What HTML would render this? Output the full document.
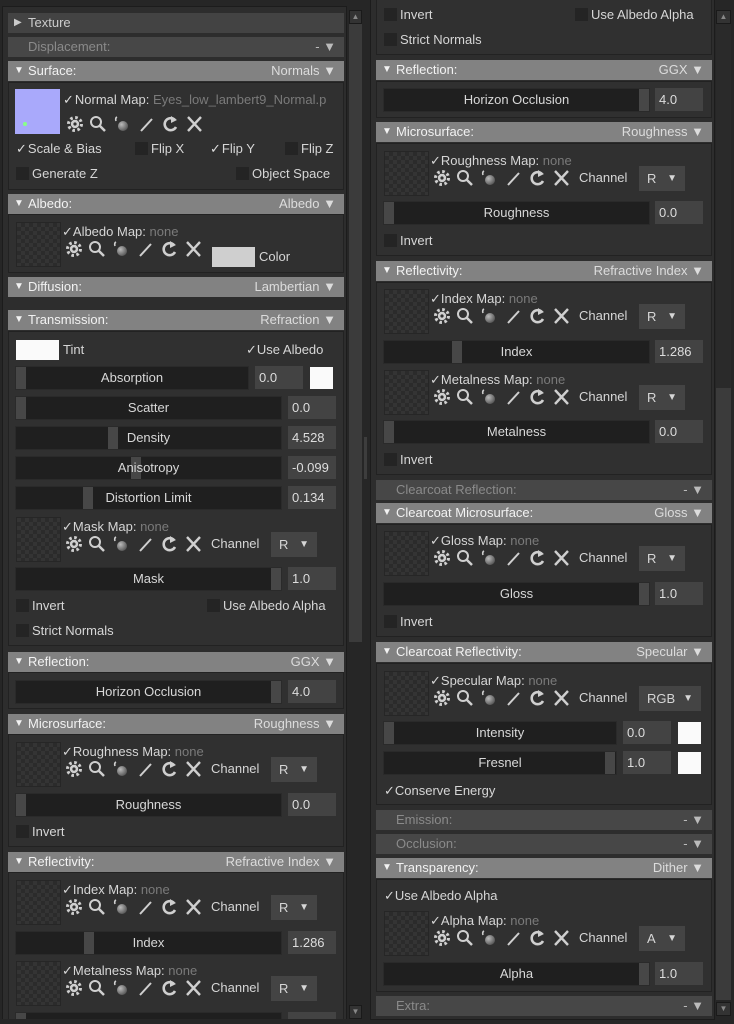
<!DOCTYPE html>
<html><head><meta charset="utf-8"><style>
*{margin:0;padding:0;box-sizing:border-box}
html,body{width:734px;height:1024px;overflow:hidden}
body{background:#262626;font-family:"Liberation Sans","DejaVu Sans",sans-serif;font-size:13px;color:#d6d6d6;position:relative}
div,span{position:absolute}
.pn{background:#2d2d2d;border:1px solid #1c1c1c}
.bd{background:#303030;border:1px solid #222;left:8px;width:336px}
.r .bd{left:376px}
.h{height:20px;width:336px;left:8px;background:#828282;color:#f2f2f2;line-height:20px;padding-left:8px}
.h b{position:absolute;right:8px;top:0;font-weight:normal;color:#dcdcdc}
.hi{background:#474747;color:#8a8a8a;padding-left:20px}
.hi b{color:#bbb}
.t{line-height:16px;white-space:nowrap}
.cb{width:13px;height:13px;background:#242424;position:relative;display:inline-block;vertical-align:-2px;margin-right:3px}
.ck{color:#ddd;margin-right:1px}
.sl{height:24px;background:#1f1f1f;border:1px solid #2a2a2a;text-align:center;line-height:22px;color:#d8d8d8}
.sl i{position:absolute;top:0;height:22px;width:10px;background:#474747}
.sl span{position:relative}
.n{height:23px;background:#434343;line-height:23px;padding-left:4px;color:#ddd}
.sw{background:#fafafa}
.th{width:45px;height:45px;border:1px solid #262626;background:conic-gradient(#2b2b2b 25%,#343434 0 50%,#2b2b2b 0 75%,#343434 0) 0 0/8px 8px}
.mp{width:330px;height:46px}
.mp .th{left:0;top:0}
.mp .lb{left:46px;top:2px}
.mp .nn{color:#7a7a7a}
.mp svg{position:absolute;left:48px;top:16px}
.mp .ch{left:195px;top:19px;line-height:16px}
.dd{left:255px;top:15px;width:46px;height:25px;background:#444;line-height:25px;padding-left:8px}
.dd:after{content:"▼";position:absolute;right:8px;font-size:10px}
.sb{background:#3b3b3b}
</style></head><body>
<svg width="0" height="0" style="position:absolute"><defs>
<radialGradient id="g" cx="0.35" cy="0.35" r="0.7"><stop offset="0" stop-color="#bbb"/><stop offset="1" stop-color="#555"/></radialGradient>
<symbol id="ic" viewBox="0 0 150 22">
<g fill="none" stroke="#cfcfcf">
<circle cx="10" cy="11" r="6.5" stroke-width="3" stroke-dasharray="2.6 2.5"/>
<circle cx="10" cy="11" r="4.2" fill="#cfcfcf" stroke="none"/>
<circle cx="10" cy="11" r="1.6" fill="#303030" stroke="none"/>
<circle cx="31" cy="9" r="5" stroke-width="2"/>
<line x1="34.5" y1="12.5" x2="40" y2="18" stroke-width="2.5"/>
<path d="M52 4 q-2 1 -1 4" stroke-width="1.6"/>
<line x1="76" y1="18" x2="87" y2="6" stroke-width="2"/>
<path d="M110 7 A6 6 0 1 0 111 14" stroke-width="2.6"/>
<path d="M123 4 L136 18 M136 4 L123 18" stroke-width="2.4"/>
</g>
<circle cx="58" cy="13" r="5" fill="url(#g)"/>
<path d="M106 3 L112 7 L106 10 Z" fill="#cfcfcf"/>
</symbol></defs></svg>

<!-- LEFT PANEL -->
<div class="pn" style="left:2px;top:6px;width:345px;height:1016px"></div>
<div class="sb" style="left:349px;top:10px;width:13px;height:632px"></div>
<div style="left:349px;top:10px;width:13px;height:14px;border:1px solid #1a1a1a;background:#333;color:#888;font-size:8px;text-align:center;line-height:12px">▲</div>
<div style="left:349px;top:1005px;width:13px;height:14px;border:1px solid #1a1a1a;background:#333;color:#888;font-size:8px;text-align:center;line-height:12px">▼</div>
<div style="left:364px;top:437px;width:3px;height:42px;background:#3d3d3d"></div>

<div class="h" style="top:13px;background:#434343;color:#ccc"><span style="font-size:10px;left:6px">▶</span><span style="left:20px">Texture</span></div>
<div class="h hi" style="top:37px">Displacement:<b>- ▼</b></div>
<div class="h" style="top:61px"><span style="font-size:10px;left:6px">▼</span><span style="left:20px">Surface:</span><b>Normals ▼</b></div>
<div class="bd" style="top:82px;height:108px"></div>
<div style="left:15px;top:89px;width:45px;height:45px;background:#a9a9fb"><span style="left:8px;top:33px;width:4px;height:4px;background:#8f8;border-radius:2px"></span></div>
<div class="t" style="left:63px;top:92px"><span class="ck" style="position:static">✓</span>Normal Map: <span style="position:static;color:#7a7a7a">Eyes_low_lambert9_Normal.p</span></div>
<svg style="position:absolute;left:65px;top:113px" width="150" height="22"><use href="#ic"/></svg>
<div class="t" style="left:16px;top:141px"><span class="ck" style="position:static">✓</span>Scale &amp; Bias</div>
<div class="t" style="left:135px;top:141px"><span class="cb"></span>Flip X</div>
<div class="t" style="left:210px;top:141px"><span class="ck" style="position:static">✓</span>Flip Y</div>
<div class="t" style="left:285px;top:141px"><span class="cb"></span>Flip Z</div>
<div class="t" style="left:16px;top:166px"><span class="cb"></span>Generate Z</div>
<div class="t" style="left:236px;top:166px"><span class="cb"></span>Object Space</div>

<div class="h" style="top:194px"><span style="font-size:10px;left:6px">▼</span><span style="left:20px">Albedo:</span><b>Albedo ▼</b></div>
<div class="bd" style="top:214px;height:59px"></div>
<div class="mp" style="left:16px;top:222px"><div class="th"></div><div class="t lb">✓Albedo Map: <span class="nn" style="position:static">none</span></div><svg width="150" height="22"><use href="#ic"/></svg><div style="left:196px;top:25px;width:43px;height:20px;background:#cfcfcf"></div><div class="t" style="left:243px;top:27px">Color</div></div>

<div class="h" style="top:277px"><span style="font-size:10px;left:6px">▼</span><span style="left:20px">Diffusion:</span><b>Lambertian ▼</b></div>
<div class="h" style="top:310px"><span style="font-size:10px;left:6px">▼</span><span style="left:20px">Transmission:</span><b>Refraction ▼</b></div>
<div class="bd" style="top:331px;height:315px"></div>
<div class="sw" style="left:16px;top:340px;width:43px;height:20px"></div>
<div class="t" style="left:63px;top:342px">Tint</div>
<div class="t" style="left:246px;top:342px">✓Use Albedo</div>
<div class="sl" style="left:15px;top:366px;width:234px"><i style="left:0"></i><span>Absorption</span></div>
<div class="n" style="left:255px;top:366px;width:48px">0.0</div>
<div class="sw" style="left:310px;top:367px;width:23px;height:22px"></div>
<div class="sl" style="left:15px;top:396px;width:267px"><i style="left:0"></i><span>Scatter</span></div>
<div class="n" style="left:288px;top:396px;width:48px">0.0</div>
<div class="sl" style="left:15px;top:426px;width:267px"><i style="left:92px"></i><span>Density</span></div>
<div class="n" style="left:288px;top:426px;width:48px">4.528</div>
<div class="sl" style="left:15px;top:456px;width:267px"><i style="left:115px"></i><span>Anisotropy</span></div>
<div class="n" style="left:288px;top:456px;width:48px">-0.099</div>
<div class="sl" style="left:15px;top:486px;width:267px"><i style="left:67px"></i><span>Distortion Limit</span></div>
<div class="n" style="left:288px;top:486px;width:48px">0.134</div>
<div class="mp" style="left:16px;top:517px"><div class="th"></div><div class="t lb">✓Mask Map: <span class="nn" style="position:static">none</span></div><svg width="150" height="22"><use href="#ic"/></svg><div class="t ch">Channel</div><div class="dd">R</div></div>
<div class="sl" style="left:15px;top:567px;width:267px"><i style="left:255px"></i><span>Mask</span></div>
<div class="n" style="left:288px;top:567px;width:48px">1.0</div>
<div class="t" style="left:16px;top:598px"><span class="cb"></span>Invert</div>
<div class="t" style="left:207px;top:598px"><span class="cb"></span>Use Albedo Alpha</div>
<div class="t" style="left:16px;top:623px"><span class="cb"></span>Strict Normals</div>

<div class="h" style="top:652px"><span style="font-size:10px;left:6px">▼</span><span style="left:20px">Reflection:</span><b>GGX ▼</b></div>
<div class="bd" style="top:672px;height:37px"></div>
<div class="sl" style="left:15px;top:680px;width:267px"><i style="left:255px"></i><span>Horizon Occlusion</span></div>
<div class="n" style="left:288px;top:680px;width:48px">4.0</div>

<div class="h" style="top:714px"><span style="font-size:10px;left:6px">▼</span><span style="left:20px">Microsurface:</span><b>Roughness ▼</b></div>
<div class="bd" style="top:734px;height:113px"></div>
<div class="mp" style="left:16px;top:742px"><div class="th"></div><div class="t lb">✓Roughness Map: <span class="nn" style="position:static">none</span></div><svg width="150" height="22"><use href="#ic"/></svg><div class="t ch">Channel</div><div class="dd">R</div></div>
<div class="sl" style="left:15px;top:793px;width:267px"><i style="left:0"></i><span>Roughness</span></div>
<div class="n" style="left:288px;top:793px;width:48px">0.0</div>
<div class="t" style="left:16px;top:824px"><span class="cb"></span>Invert</div>

<div class="h" style="top:852px"><span style="font-size:10px;left:6px">▼</span><span style="left:20px">Reflectivity:</span><b>Refractive Index ▼</b></div>
<div class="bd" style="top:872px;height:150px"></div>
<div class="mp" style="left:16px;top:880px"><div class="th"></div><div class="t lb">✓Index Map: <span class="nn" style="position:static">none</span></div><svg width="150" height="22"><use href="#ic"/></svg><div class="t ch">Channel</div><div class="dd">R</div></div>
<div class="sl" style="left:15px;top:931px;width:267px"><i style="left:68px"></i><span>Index</span></div>
<div class="n" style="left:288px;top:931px;width:48px">1.286</div>
<div class="mp" style="left:16px;top:961px"><div class="th"></div><div class="t lb">✓Metalness Map: <span class="nn" style="position:static">none</span></div><svg width="150" height="22"><use href="#ic"/></svg><div class="t ch">Channel</div><div class="dd">R</div></div>
<div class="sl" style="left:15px;top:1012px;width:267px;height:8px"><i style="left:0;height:6px"></i></div>
<div class="n" style="left:288px;top:1012px;width:48px;height:8px"></div>
<div style="left:0;top:1019px;width:370px;height:5px;background:#262626"></div>

<!-- RIGHT PANEL -->
<div class="r">
<div class="pn" style="left:370px;top:-2px;width:345px;height:1022px"></div>
<div style="left:716px;top:10px;width:15px;height:378px;background:#2a2a2a"></div>
<div class="sb" style="left:716px;top:388px;width:15px;height:612px"></div>
<div style="left:716px;top:10px;width:15px;height:14px;border:1px solid #1a1a1a;background:#333;color:#888;font-size:8px;text-align:center;line-height:12px">▲</div>
<div style="left:716px;top:1002px;width:15px;height:14px;border:1px solid #1a1a1a;background:#333;color:#888;font-size:8px;text-align:center;line-height:12px">▼</div>

<div class="bd" style="top:-2px;height:57px"></div>
<div class="t" style="left:384px;top:7px"><span class="cb"></span>Invert</div>
<div class="t" style="left:575px;top:7px"><span class="cb"></span>Use Albedo Alpha</div>
<div class="t" style="left:384px;top:32px"><span class="cb"></span>Strict Normals</div>

<div class="h" style="left:376px;top:60px"><span style="font-size:10px;left:6px">▼</span><span style="left:20px">Reflection:</span><b>GGX ▼</b></div>
<div class="bd" style="top:81px;height:37px"></div>
<div class="sl" style="left:383px;top:88px;width:267px"><i style="left:255px"></i><span>Horizon Occlusion</span></div>
<div class="n" style="left:655px;top:88px;width:48px">4.0</div>

<div class="h" style="left:376px;top:122px"><span style="font-size:10px;left:6px">▼</span><span style="left:20px">Microsurface:</span><b>Roughness ▼</b></div>
<div class="bd" style="top:143px;height:113px"></div>
<div class="mp" style="left:384px;top:151px"><div class="th"></div><div class="t lb">✓Roughness Map: <span class="nn" style="position:static">none</span></div><svg width="150" height="22"><use href="#ic"/></svg><div class="t ch">Channel</div><div class="dd">R</div></div>
<div class="sl" style="left:383px;top:201px;width:267px"><i style="left:0"></i><span>Roughness</span></div>
<div class="n" style="left:655px;top:201px;width:48px">0.0</div>
<div class="t" style="left:384px;top:233px"><span class="cb"></span>Invert</div>

<div class="h" style="left:376px;top:261px"><span style="font-size:10px;left:6px">▼</span><span style="left:20px">Reflectivity:</span><b>Refractive Index ▼</b></div>
<div class="bd" style="top:282px;height:193px"></div>
<div class="mp" style="left:384px;top:289px"><div class="th"></div><div class="t lb">✓Index Map: <span class="nn" style="position:static">none</span></div><svg width="150" height="22"><use href="#ic"/></svg><div class="t ch">Channel</div><div class="dd">R</div></div>
<div class="sl" style="left:383px;top:340px;width:267px"><i style="left:68px"></i><span>Index</span></div>
<div class="n" style="left:655px;top:340px;width:48px">1.286</div>
<div class="mp" style="left:384px;top:370px"><div class="th"></div><div class="t lb">✓Metalness Map: <span class="nn" style="position:static">none</span></div><svg width="150" height="22"><use href="#ic"/></svg><div class="t ch">Channel</div><div class="dd">R</div></div>
<div class="sl" style="left:383px;top:420px;width:267px"><i style="left:0"></i><span>Metalness</span></div>
<div class="n" style="left:655px;top:420px;width:48px">0.0</div>
<div class="t" style="left:384px;top:452px"><span class="cb"></span>Invert</div>

<div class="h hi" style="left:376px;top:480px">Clearcoat Reflection:<b>- ▼</b></div>
<div class="h" style="left:376px;top:503px"><span style="font-size:10px;left:6px">▼</span><span style="left:20px">Clearcoat Microsurface:</span><b>Gloss ▼</b></div>
<div class="bd" style="top:524px;height:113px"></div>
<div class="mp" style="left:384px;top:531px"><div class="th"></div><div class="t lb">✓Gloss Map: <span class="nn" style="position:static">none</span></div><svg width="150" height="22"><use href="#ic"/></svg><div class="t ch">Channel</div><div class="dd">R</div></div>
<div class="sl" style="left:383px;top:582px;width:267px"><i style="left:255px"></i><span>Gloss</span></div>
<div class="n" style="left:655px;top:582px;width:48px">1.0</div>
<div class="t" style="left:384px;top:614px"><span class="cb"></span>Invert</div>

<div class="h" style="left:376px;top:642px"><span style="font-size:10px;left:6px">▼</span><span style="left:20px">Clearcoat Reflectivity:</span><b>Specular ▼</b></div>
<div class="bd" style="top:663px;height:142px"></div>
<div class="mp" style="left:384px;top:671px"><div class="th"></div><div class="t lb">✓Specular Map: <span class="nn" style="position:static">none</span></div><svg width="150" height="22"><use href="#ic"/></svg><div class="t ch">Channel</div><div class="dd" style="width:62px">RGB</div></div>
<div class="sl" style="left:383px;top:721px;width:234px"><i style="left:0"></i><span>Intensity</span></div>
<div class="n" style="left:623px;top:721px;width:48px">0.0</div>
<div class="sw" style="left:678px;top:722px;width:23px;height:22px"></div>
<div class="sl" style="left:383px;top:751px;width:234px"><i style="left:221px"></i><span>Fresnel</span></div>
<div class="n" style="left:623px;top:751px;width:48px">1.0</div>
<div class="sw" style="left:678px;top:752px;width:23px;height:22px"></div>
<div class="t" style="left:384px;top:783px">✓Conserve Energy</div>

<div class="h hi" style="left:376px;top:810px">Emission:<b>- ▼</b></div>
<div class="h hi" style="left:376px;top:834px">Occlusion:<b>- ▼</b></div>
<div class="h" style="left:376px;top:858px"><span style="font-size:10px;left:6px">▼</span><span style="left:20px">Transparency:</span><b>Dither ▼</b></div>
<div class="bd" style="top:879px;height:113px"></div>
<div class="t" style="left:384px;top:888px">✓Use Albedo Alpha</div>
<div class="mp" style="left:384px;top:911px"><div class="th"></div><div class="t lb">✓Alpha Map: <span class="nn" style="position:static">none</span></div><svg width="150" height="22"><use href="#ic"/></svg><div class="t ch">Channel</div><div class="dd">A</div></div>
<div class="sl" style="left:383px;top:962px;width:267px"><i style="left:255px"></i><span>Alpha</span></div>
<div class="n" style="left:655px;top:962px;width:48px">1.0</div>
<div class="h hi" style="left:376px;top:996px">Extra:<b>- ▼</b></div>
</div>
</body></html>
